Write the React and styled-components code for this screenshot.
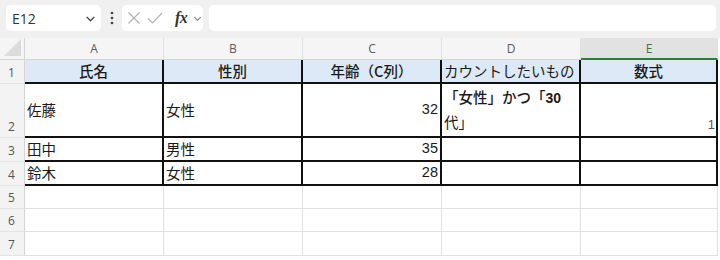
import React from "react";
import styled, { createGlobalStyle } from "styled-components";

const Global = createGlobalStyle`
  html, body {
    margin: 0;
    padding: 0;
    background: #fff;
    overflow: hidden;
  }
  body {
    font-family: "Noto Sans CJK JP", "Noto Sans", sans-serif;
  }
`;

// toolbar
const Toolbar = styled.div`
  height: 38px;
  box-sizing: border-box;
  background: #f0f0f0;
  display: flex;
  align-items: flex-start;
  padding: 5px 4px 0 6px;
`;

const NameBox = styled.div`
  width: 95px;
  height: 26px;
  box-sizing: border-box;
  background: #fff;
  border-radius: 5px;
  display: flex;
  align-items: center;
  justify-content: space-between;
  padding: 0 5px 0 6px;
  font-family: "Open Sans", "Noto Sans", sans-serif;
  font-size: 14px;
  color: #333;
`;

const Dots = styled.div`
  width: 21px;
  height: 26px;
  display: flex;
  align-items: center;
  justify-content: center;
`;

const FormulaButtons = styled.div`
  width: 81px;
  height: 26px;
  box-sizing: border-box;
  background: #fff;
  border-radius: 5px;
  display: flex;
  align-items: center;
  padding: 0 0 0 5px;
  gap: 6px;
`;

const Fx = styled.span`
  font-family: "Liberation Serif", "DejaVu Serif", serif;
  font-style: italic;
  font-weight: bold;
  font-size: 16px;
  color: #333;
  margin-left: 6px;
  letter-spacing: -0.5px;
`;

const FormulaInput = styled.div`
  flex: 1;
  height: 26px;
  margin-left: 6px;
  background: #fff;
  border-radius: 5px;
`;

// sheet
const Sheet = styled.div`
  display: grid;
  grid-template-columns: 25px 139px 139px 139px 139px 137px;
  grid-template-rows: ${(p) => p.$rows};
  width: 718px;
`;

const Corner = styled.div`
  box-sizing: border-box;
  background: #f5f5f5;
  border-right: 1px solid #d4d4d4;
  border-bottom: 1px solid #d4d4d4;
  position: relative;
  overflow: hidden;
  &::after {
    content: "";
    position: absolute;
    right: 3px;
    bottom: 3px;
    width: 0;
    height: 0;
    border-left: 17px solid transparent;
    border-bottom: 17px solid #dcdcdc;
  }
`;

const ColHead = styled.div`
  box-sizing: border-box;
  background: ${(p) => (p.$active ? "#e2e2e2" : "#f5f5f5")};
  color: ${(p) => (p.$active ? "#2f7d3a" : "#5a5a5a")};
  border-right: 1px solid #e0e0e0;
  border-bottom: ${(p) => (p.$active ? "2px solid #2f7d3a" : "1px solid #d4d4d4")};
  display: flex;
  align-items: center;
  justify-content: center;
  font-family: "Open Sans", "Noto Sans", sans-serif;
  font-size: 12px;
`;

const RowHead = styled.div`
  box-sizing: border-box;
  background: #f3f3f3;
  border-right: 1px solid #d4d4d4;
  border-bottom: 1px solid #e4e4e4;
  display: flex;
  align-items: flex-end;
  padding: 0 0 2px 8px;
  font-family: "Open Sans", "Noto Sans", sans-serif;
  font-size: 12px;
  color: #555;
`;

const Cell = styled.div`
  box-sizing: border-box;
  min-width: 0;
  background: ${(p) => p.$bg || "#fff"};
  border-right: ${(p) => (p.$thick ? "2px solid #111" : "1px solid #e1e1e1")};
  border-bottom: ${(p) => (p.$thick ? "2px solid #111" : "1px solid #e1e1e1")};
  display: flex;
  align-items: ${(p) => p.$valign || "center"};
  justify-content: ${(p) =>
    p.$align === "right" ? "flex-end" : p.$align === "center" ? "center" : "flex-start"};
  padding: 0 2px;
  font-size: 14.5px;
  font-weight: ${(p) => (p.$bold ? 500 : 400)};
  color: #1a1a1a;
  white-space: nowrap;
  overflow: hidden;
  line-height: 1.2;
`;

const Num = styled.span`
  font-family: "Liberation Sans", Arial, sans-serif;
  font-size: ${(p) => (p.$small ? "13px" : "14.5px")};
  color: ${(p) => (p.$small ? "#555" : "#1a1a1a")};
  margin-bottom: ${(p) => (p.$small ? "3px" : "0")};
  margin-right: ${(p) => (p.$small ? "-1px" : "0")};
`;

const Wrapped = styled.div`
  white-space: normal;
  line-height: 24px;
  margin-top: -1px;
  b {
    font-weight: 500;
  }
`;

const Digits = styled.span`
  font-family: "Liberation Sans", Arial, sans-serif;
  font-weight: 700;
  font-size: 14px;
`;

const Chevron = ({ size = 10, color = "#555" }) => (
  <svg width={size} height={size} viewBox="0 0 10 10">
    <path d="M1.5 3.5 L5 7 L8.5 3.5" fill="none" stroke={color} strokeWidth="1.2" />
  </svg>
);

const columns = ["A", "B", "C", "D", "E"];
const headBg = "#dde9f6";

const rows = [
  {
    n: 1,
    h: 24,
    thick: true,
    cells: [
      { text: "氏名", align: "center", bold: true, bg: headBg },
      { text: "性別", align: "center", bold: true, bg: headBg },
      { text: "年齢（C列）", align: "center", bold: true, bg: headBg },
      { text: "カウントしたいもの", align: "left", bg: headBg },
      { text: "数式", align: "center", bold: true, bg: headBg },
    ],
  },
  {
    n: 2,
    h: 54,
    thick: true,
    cells: [
      { text: "佐藤" },
      { text: "女性" },
      { num: "32", align: "right" },
      { wrap: true },
      { num: "1", small: true, align: "right", valign: "flex-end" },
    ],
  },
  {
    n: 3,
    h: 24,
    thick: true,
    cells: [{ text: "田中" }, { text: "男性" }, { num: "35", align: "right" }, {}, {}],
  },
  {
    n: 4,
    h: 24,
    thick: true,
    cells: [{ text: "鈴木" }, { text: "女性" }, { num: "28", align: "right" }, {}, {}],
  },
  { n: 5, h: 23, cells: [{}, {}, {}, {}, {}] },
  { n: 6, h: 23, cells: [{}, {}, {}, {}, {}] },
  { n: 7, h: 24, cells: [{}, {}, {}, {}, {}] },
];

const renderContent = (c) => {
  if (c.num) return <Num $small={c.small}>{c.num}</Num>;
  if (c.wrap)
    return (
      <Wrapped>
        <b>
          「女性」かつ「<Digits>30</Digits>
        </b>
        <br />
        代」
      </Wrapped>
    );
  return c.text || null;
};

export default function App() {
  const rowTracks = ["22px", ...rows.map((r) => `${r.h}px`)].join(" ");
  return (
    <>
      <Global />
      <Toolbar>
        <NameBox>
          <span>E12</span>
          <Chevron size={11} color="#444" />
        </NameBox>
        <Dots>
          <svg width="4" height="14" viewBox="0 0 4 14">
            <circle cx="2" cy="2" r="1.3" fill="#444" />
            <circle cx="2" cy="7" r="1.3" fill="#444" />
            <circle cx="2" cy="12" r="1.3" fill="#444" />
          </svg>
        </Dots>
        <FormulaButtons>
          <svg width="14" height="14" viewBox="0 0 14 14">
            <path d="M1.5 1.5 L12.5 12.5 M12.5 1.5 L1.5 12.5" stroke="#b0b0b0" strokeWidth="1.1" fill="none" />
          </svg>
          <svg width="16" height="14" viewBox="0 0 16 14">
            <path d="M1 7.5 L5.5 12 L15 2" stroke="#b0b0b0" strokeWidth="1.1" fill="none" />
          </svg>
          <Fx>fx</Fx>
          <Chevron size={9} color="#777" />
        </FormulaButtons>
        <FormulaInput />
      </Toolbar>
      <Sheet $rows={rowTracks}>
        <Corner />
        {columns.map((c) => (
          <ColHead key={c} $active={c === "E"}>
            {c}
          </ColHead>
        ))}
        {rows.map((r) => (
          <React.Fragment key={r.n}>
            <RowHead>{r.n}</RowHead>
            {r.cells.map((c, i) => (
              <Cell
                key={i}
                $thick={r.thick}
                $bg={c.bg}
                $align={c.align}
                $valign={c.valign}
                $bold={c.bold}
              >
                {renderContent(c)}
              </Cell>
            ))}
          </React.Fragment>
        ))}
      </Sheet>
    </>
  );
}
